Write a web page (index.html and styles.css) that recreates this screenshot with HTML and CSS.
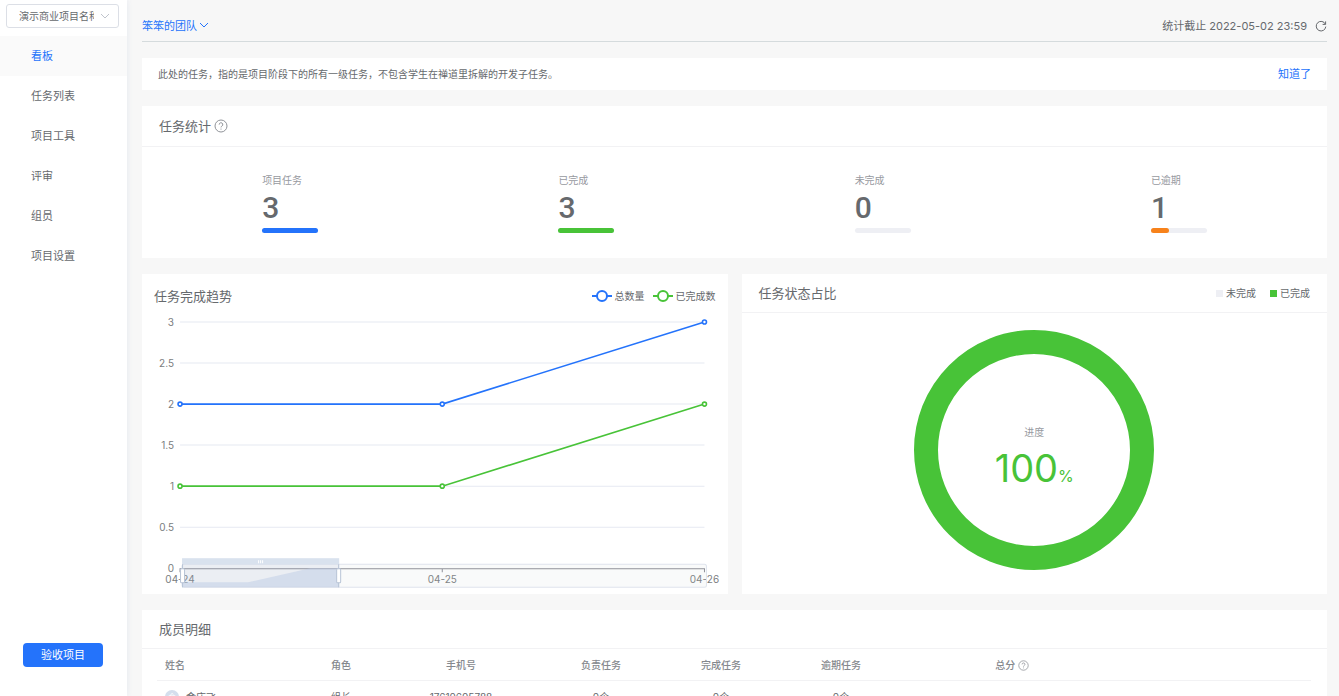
FILE: index.html
```html
<!doctype html>
<html lang="zh-CN">
  <head>
    <meta charset="UTF-8" />
    <meta name="viewport" content="width=device-width, initial-scale=1.0" />
    <title>看板</title>
    <link rel="stylesheet" href="styles.css">
  </head>
  <body>

    <aside class="sidebar">
      <div class="project-select">
        <select aria-label="项目">
          <option>演示商业项目名称</option>
        </select>
        <svg class="arrow" viewBox="0 0 10 6"><path d="M1 1l4 4 4-4" /></svg>
      </div>
      <nav class="menu">
        <a href="#" class="active">看板</a>
        <a href="#">任务列表</a>
        <a href="#">项目工具</a>
        <a href="#">评审</a>
        <a href="#">组员</a>
        <a href="#">项目设置</a>
      </nav>
      <button class="accept-btn">验收项目</button>
    </aside>

    <main class="main">
      <header class="top-bar">
        <button class="team-btn">笨笨的团队<svg viewBox="0 0 10 6"><path d="M1 1l4 4 4-4" /></svg></button>
        <div class="deadline">
          <span>统计截止 2022-05-02 23:59</span>
          <button class="refresh-btn" aria-label="刷新">
            <svg viewBox="0 0 12 12"><path d="M10.4 4.2A4.8 4.8 0 1 0 10.8 6.6M10.6 1.4v3h-3" /></svg>
          </button>
        </div>
      </header>

      <section class="notice">
        <p>此处的任务，指的是项目阶段下的所有一级任务，不包含学生在禅道里拆解的开发子任务。</p>
        <button>知道了</button>
      </section>

      <section class="card">
        <div class="card-head stats-head">
          <h3>任务统计</h3>
          <svg class="help" viewBox="0 0 14 14"><circle cx="7" cy="7" r="6" /><path d="M5.2 5.6a1.8 1.8 0 1 1 2.7 1.5Q7 7.6 7 8.4M7 9.6v1" /></svg>
        </div>
        <div class="stats">
          <div class="stat">
            <p>项目任务</p>
            <strong>3</strong>
            <div class="bar"><div class="blue" style="width: 100%"></div></div>
          </div>
          <div class="stat">
            <p>已完成</p>
            <strong>3</strong>
            <div class="bar"><div class="green" style="width: 100%"></div></div>
          </div>
          <div class="stat">
            <p>未完成</p>
            <strong>0</strong>
            <div class="bar"></div>
          </div>
          <div class="stat">
            <p>已逾期</p>
            <strong>1</strong>
            <div class="bar"><div class="orange" style="width: 33%"></div></div>
          </div>
        </div>
      </section>

      <div class="charts">
        <section class="card">
          <div class="trend-head">
            <h3>任务完成趋势</h3>
            <div class="legend">
              <span class="blue-line"><svg viewBox="0 0 20 12"><path d="M0 6h20" /><circle cx="10" cy="6" r="5" /></svg>总数量</span>
              <span class="green-line"><svg viewBox="0 0 20 12"><path d="M0 6h20" /><circle cx="10" cy="6" r="5" /></svg>已完成数</span>
            </div>
          </div>
          <svg class="trend" viewBox="0 0 585 284">
            <g class="grid">
              <path d="M38 12H562M38 53H562M38 94H562M38 135H562M38 176H562M38 217H562" />
            </g>
            <g class="axis-y">
              <text x="32" y="16">3</text>
              <text x="32" y="57">2.5</text>
              <text x="32" y="98">2</text>
              <text x="32" y="139">1.5</text>
              <text x="32" y="180">1</text>
              <text x="32" y="221">0.5</text>
              <text x="32" y="262">0</text>
            </g>
            <path class="axis-line" d="M38 262V258.500H562V262M300 258.500V262" />
            <g class="axis-x">
              <text x="38" y="273">04-24</text>
              <text x="300" y="273">04-25</text>
              <text x="562" y="273">04-26</text>
            </g>
            <g class="line blue-line">
              <path d="M38 94H300L562 12" />
              <circle cx="38" cy="94" r="2" />
              <circle cx="300" cy="94" r="2" />
              <circle cx="562" cy="12" r="2" />
            </g>
            <g class="line green-line">
              <path d="M38 176H300L562 94" />
              <circle cx="38" cy="176" r="2" />
              <circle cx="300" cy="176" r="2" />
              <circle cx="562" cy="94" r="2" />
            </g>
            <!-- data zoom -->
            <g class="zoom">
              <rect class="zoom-box" x="40" y="254" width="524" height="23" rx="2" />
              <path class="zoom-area" d="M40 272H106L168 258H197V277H40z" />
              <rect class="zoom-range" x="40" y="254" width="157" height="23" />
              <rect class="zoom-move" x="40" y="248" width="157" height="6" />
              <path class="zoom-grip" d="M116.500 250v3M118.500 250v3M120.500 250v3" />
              <path class="zoom-side" d="M40.500 254V277M196.500 254V277" />
              <rect class="zoom-handle" x="38.500" y="258.500" width="4" height="14" rx="1" />
              <rect class="zoom-handle" x="194.500" y="258.500" width="4" height="14" rx="1" />
            </g>
          </svg>
        </section>

        <section class="card">
          <div class="card-head ratio-head">
            <h3>任务状态占比</h3>
            <div class="ratio-legend">
              <span><i></i>未完成</span>
              <span><i class="green"></i>已完成</span>
            </div>
          </div>
          <div class="donut">
            <p>进度</p>
            <div class="percent">100<small>%</small></div>
          </div>
        </section>
      </div>

      <section class="card">
        <div class="card-head">
          <h3>成员明细</h3>
        </div>
        <table class="members">
          <colgroup>
            <col class="col-name"><col class="col-role"><col class="col-phone">
            <col class="col-task"><col class="col-task"><col class="col-task">
            <col class="col-score"><col>
          </colgroup>
          <thead>
            <tr>
              <th>姓名</th>
              <th>角色</th>
              <th>手机号</th>
              <th>负责任务</th>
              <th>完成任务</th>
              <th>逾期任务</th>
              <th>总分 <svg class="help" viewBox="0 0 14 14"><circle cx="7" cy="7" r="6" /><path d="M5.2 5.6a1.8 1.8 0 1 1 2.7 1.5Q7 7.6 7 8.4M7 9.6v1" /></svg></th>
              <th></th>
            </tr>
          </thead>
          <tbody>
            <tr>
              <td><div class="member"><span class="avatar">金</span>金庆飞</div></td>
              <td>组长</td>
              <td>17610605788</td>
              <td>0个</td>
              <td>0个</td>
              <td>0个</td>
              <td></td>
              <td></td>
            </tr>
          </tbody>
        </table>
      </section>
    </main>

  </body>
</html>
```

FILE: styles.css
```css
* {
  box-sizing: border-box;
}
body {
  display: flex;
  height: 100vh;
  margin: 0;
  overflow: hidden;
  background-color: #f7f7f7;
  color: #66696d;
  font-family: Inter, "Noto Sans CJK SC", sans-serif;
  font-size: 11px;
  line-height: 16px;
}
h3, p {
  margin: 0;
  font-weight: 400;
}
h3 {
  font-size: 13px;
  line-height: 20px;
}
button {
  padding: 0;
  border: 0;
  background: none;
  color: #2473fb;
  font: inherit;
  cursor: pointer;
}
svg {
  fill: none;
  stroke: currentColor;
}

.sidebar {
  display: flex;
  flex-direction: column;
  flex: none;
  width: 127px;
  padding-bottom: 29px;
  background-color: white;
  box-shadow: 0 0 6px #e4e8f0;
}
.project-select {
  position: relative;
  margin: 4px 8px 8px 6px;
}
.project-select select {
  display: block;
  appearance: none;
  width: 100%;
  height: 24px;
  padding: 0 24px 0 12px;
  border: 1px solid #dcdfe6;
  border-radius: 3px;
  background-color: white;
  color: #66696d;
  font: inherit;
  font-size: 10px;
}
.project-select .arrow {
  position: absolute;
  top: 9px;
  right: 9px;
  width: 10px;
  color: #c0c4cc;
}
.menu a {
  display: block;
  padding: 1px 0 0 31px;
  color: #66696d;
  line-height: 39px;
  text-decoration: none;
}
.menu .active {
  background-color: #fafafa;
  color: #2473fb;
}
.accept-btn {
  width: 80px;
  height: 24px;
  margin: auto auto 0 23px;
  border-radius: 4px;
  background-color: #2473fb;
  color: white;
}

.main {
  flex: 1;
  min-width: 0;
  padding: 10px 12px 0 15px;
}
.top-bar {
  display: flex;
  align-items: center;
  justify-content: space-between;
  height: 32px;
  border-bottom: 1px solid #d5dbdd;
}
.team-btn svg {
  width: 10px;
  height: 6px;
  margin: 0 0 2px 2px;
}
.deadline {
  display: flex;
  align-items: center;
  gap: 8px;
}
.refresh-btn {
  display: flex;
  color: #66696d;
}
.refresh-btn svg {
  width: 12px;
}
.notice {
  display: flex;
  align-items: center;
  justify-content: space-between;
  height: 32px;
  margin: 16px 0;
  padding: 0 16px;
  background-color: white;
  font-size: 10px;
}
.notice button {
  font-size: 11px;
}

.card {
  margin-bottom: 16px;
  background-color: white;
}
.card-head {
  display: flex;
  align-items: center;
  padding: 9px 17px;
  border-bottom: 1px solid #f2f2f4;
}
.stats-head {
  gap: 3px;
  padding: 10px 17px;
}
.help {
  width: 14px;
  color: #909399;
}
.stats {
  display: grid;
  grid-template-columns: repeat(4, 1fr);
  padding: 25px 0;
}
.stat {
  width: 56px;
  margin: 0 auto;
}
.stat p {
  color: #979a9f;
  font-size: 10px;
}
.stat strong {
  display: block;
  font-family: Roboto, sans-serif;
  font-size: 30px;
  font-weight: 500;
  line-height: 40px;
}
.bar {
  height: 5px;
  border-radius: 3px;
  background-color: #eeeff4;
}
.bar div {
  height: 5px;
  border-radius: 3px;
}
.bar .blue { background-color: #2473fb; }
.bar .orange { background-color: #f7821b; }
.green { background-color: #48c338; }

.charts {
  display: grid;
  grid-template-columns: 1fr 1fr;
  gap: 14px;
}
.trend-head {
  display: flex;
  align-items: center;
  justify-content: space-between;
  padding: 12px 12px 4px;
}
.legend {
  display: flex;
  gap: 8px;
  font-size: 10px;
}
.legend span {
  display: flex;
  align-items: center;
  gap: 3px;
}
.legend svg {
  width: 20px;
  stroke-width: 2;
}
.legend circle, .line circle {
  fill: white;
}
.blue-line svg, .line.blue-line { stroke: #2473fb; }
.green-line svg, .line.green-line { stroke: #48c338; }
.trend {
  display: block;
  width: 100%;
}
.trend text {
  stroke: none;
  fill: #7a7d80;
  font-size: 10px;
}
.grid { stroke: #e6e9f2; }
.axis-y { text-anchor: end; }
.axis-x { text-anchor: middle; }
.axis-line { stroke: #8a8a94; }
.line { stroke-width: 1.6; }
.zoom-box {
  fill: #c8ccd21a;
  stroke: #dfe4ed;
}
.zoom-area {
  fill: #c6d3ea88;
  stroke: none;
}
.zoom-range {
  fill: #8f9fc71f;
  stroke: none;
}
.zoom-move {
  fill: #d9e2ee;
  stroke: none;
}
.zoom-grip { stroke: white; }
.zoom-side { stroke: #b8c4d6; }
.zoom-handle {
  fill: white;
  stroke: #b8c4d6;
}

.ratio-head {
  justify-content: space-between;
}
.ratio-legend {
  display: flex;
  gap: 14px;
  font-size: 10px;
}
.ratio-legend span {
  display: flex;
  align-items: center;
  gap: 3px;
}
.ratio-legend i {
  width: 7px;
  height: 7px;
}
.ratio-legend i:not(.green) {
  background-color: #eeeff4;
}
.donut {
  display: flex;
  flex-direction: column;
  align-items: center;
  width: 240px;
  height: 240px;
  margin: 17px auto;
  padding-top: 70px;
  border: 24px solid #48c338;
  border-radius: 50%;
}
.donut p {
  color: #979a9f;
  font-size: 10px;
}
.percent {
  color: #48c338;
  font-size: 38px;
  font-weight: 400;
  line-height: 56px;
}
.percent small {
  font-size: 16px;
}

.members {
  width: calc(100% - 31px);
  margin: 0 16px 0 15px;
  border-spacing: 0;
  table-layout: fixed;
  font-size: 10px;
  text-align: center;
}
.members th, .members td {
  height: 32px;
  padding: 0;
  border-bottom: 1px solid #f2f2f4;
}
.members th {
  color: #85888d;
  font-weight: 500;
}
.members th:first-child, .members td:first-child {
  padding-left: 8px;
  text-align: left;
}
.members .help {
  width: 11px;
  vertical-align: -2px;
}
.col-name { width: 144px; }
.col-role { width: 80px; }
.col-phone { width: 160px; }
.col-task { width: 120px; }
.col-score { width: 222px; }
.member {
  display: flex;
  align-items: center;
  gap: 7px;
}
.avatar {
  width: 14px;
  height: 14px;
  border-radius: 50%;
  background-color: #d4deec;
  color: white;
  font-size: 8px;
  line-height: 14px;
  text-align: center;
}
```
